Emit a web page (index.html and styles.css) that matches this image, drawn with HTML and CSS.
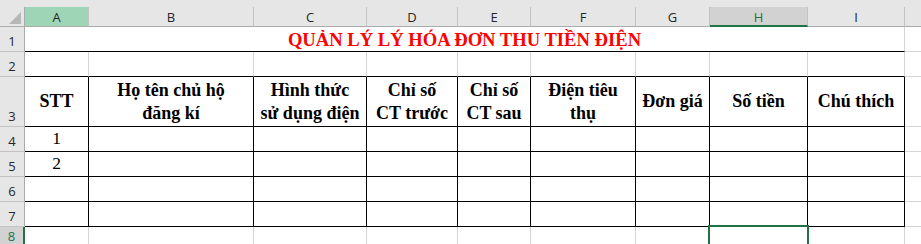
FILE: index.html
```html
<!DOCTYPE html>
<html lang="vi">
<head>
<meta charset="utf-8">
<title>Quản lý hóa đơn thu tiền điện</title>
<link rel="stylesheet" href="styles.css">
</head>
<body>
<div class="sheet">
  <div class="strip"></div>

  <div class="corner"><svg class="tri" width="12" height="12" viewBox="0 0 12 12"><polygon points="12,0 12,12 0,12" fill="#b7b7b7"/></svg></div>
  <div class="colh colh-a">A</div>
  <div class="colh">B</div>
  <div class="colh">C</div>
  <div class="colh">D</div>
  <div class="colh">E</div>
  <div class="colh">F</div>
  <div class="colh">G</div>
  <div class="colh colh-sel">H</div>
  <div class="colh">I</div>
  <div class="colh colh-end"></div>

  <div class="rowh">1</div>
  <div class="cell title bb">QUẢN LÝ LÝ HÓA ĐƠN THU TIỀN ĐIỆN</div>
  <div class="cell tail"></div>

  <div class="rowh">2</div>
  <div class="cell bb"></div>
  <div class="cell bb"></div>
  <div class="cell bb"></div>
  <div class="cell bb"></div>
  <div class="cell bb"></div>
  <div class="cell bb"></div>
  <div class="cell bb"></div>
  <div class="cell bb"></div>
  <div class="cell bb"></div>
  <div class="cell tail"></div>

  <div class="rowh">3</div>
  <div class="cell box head">STT</div>
  <div class="cell box head">Họ tên chủ hộ<br>đăng kí</div>
  <div class="cell box head">Hình thức<br>sử dụng điện</div>
  <div class="cell box head">Chỉ số<br>CT trước</div>
  <div class="cell box head">Chỉ số<br>CT sau</div>
  <div class="cell box head">Điện tiêu<br>thụ</div>
  <div class="cell box head">Đơn giá</div>
  <div class="cell box head">Số tiền</div>
  <div class="cell box head">Chú thích</div>
  <div class="cell tail"></div>

  <div class="rowh">4</div>
  <div class="cell box num">1</div>
  <div class="cell box"></div>
  <div class="cell box"></div>
  <div class="cell box"></div>
  <div class="cell box"></div>
  <div class="cell box"></div>
  <div class="cell box"></div>
  <div class="cell box"></div>
  <div class="cell box"></div>
  <div class="cell tail"></div>

  <div class="rowh">5</div>
  <div class="cell box num">2</div>
  <div class="cell box"></div>
  <div class="cell box"></div>
  <div class="cell box"></div>
  <div class="cell box"></div>
  <div class="cell box"></div>
  <div class="cell box"></div>
  <div class="cell box"></div>
  <div class="cell box"></div>
  <div class="cell tail"></div>

  <div class="rowh">6</div>
  <div class="cell box"></div>
  <div class="cell box"></div>
  <div class="cell box"></div>
  <div class="cell box"></div>
  <div class="cell box"></div>
  <div class="cell box"></div>
  <div class="cell box"></div>
  <div class="cell box"></div>
  <div class="cell box"></div>
  <div class="cell tail"></div>

  <div class="rowh">7</div>
  <div class="cell box"></div>
  <div class="cell box"></div>
  <div class="cell box"></div>
  <div class="cell box"></div>
  <div class="cell box"></div>
  <div class="cell box"></div>
  <div class="cell box"></div>
  <div class="cell box"></div>
  <div class="cell box"></div>
  <div class="cell tail"></div>

  <div class="rowh rowh-sel">8</div>
  <div class="cell"></div>
  <div class="cell"></div>
  <div class="cell"></div>
  <div class="cell"></div>
  <div class="cell"></div>
  <div class="cell"></div>
  <div class="cell"></div>
  <div class="cell active"></div>
  <div class="cell"></div>
  <div class="cell tail"></div>
</div>
</body>
</html>
```

FILE: styles.css
```css
html, body {
  margin: 0;
  padding: 0;
  background: #ffffff;
  overflow: hidden;
}

.sheet {
  display: grid;
  grid-template-columns: 25px 64px 165px 113px 91px 73px 105px 74px 98px 97px 1fr;
  grid-template-rows: 7px 20px 25px 25px 50px 25px 25px 25px 25px 1fr;
  width: 921px;
  height: 244px;
  overflow: hidden;
}

.strip {
  grid-column: 1 / -1;
  background: #e6e6e6;
}

.corner {
  background: #e6e6e6;
  border-right: 1px solid #ababab;
  border-bottom: 1px solid #ababab;
  display: flex;
  justify-content: flex-end;
  align-items: flex-end;
  padding: 0 3px 2px 0;
}

.tri {
  display: block;
}

.colh {
  background: #e6e6e6;
  border-right: 1px solid #c3c3c3;
  border-bottom: 1px solid #ababab;
  display: flex;
  justify-content: center;
  align-items: center;
  font-family: "Open Sans", "Noto Sans", sans-serif;
  font-size: 13px;
  color: #262626;
  padding-top: 1px;
}

.colh-a {
  background: #9fd5b7;
}

.colh-sel {
  background: #d2d2d2;
  border-bottom: 2px solid #217346;
  color: #217346;
  padding-top: 2px;
}

.colh-end {
  border-right: none;
}

.rowh {
  background: #e6e6e6;
  border-right: 1px solid #ababab;
  border-bottom: 1px solid #c3c3c3;
  display: flex;
  justify-content: center;
  align-items: flex-end;
  font-family: "Open Sans", "Noto Sans", sans-serif;
  font-size: 13px;
  line-height: 18px;
  color: #262626;
  padding-bottom: 1px;
}

.rowh-sel {
  background: #d2d2d2;
  border-right: 2px solid #217346;
  color: #217346;
}

.cell {
  border-right: 1px solid #d4d4d4;
  border-bottom: 1px solid #d4d4d4;
  font-family: "Liberation Serif", "Times New Roman", serif;
  color: #000000;
  position: relative;
}

.tail {
  border-right: none;
}

.bb {
  border-bottom-color: #000000;
}

.box {
  border-right-color: #000000;
  border-bottom-color: #000000;
}

.title {
  grid-column: 2 / 11;
  display: flex;
  justify-content: center;
  align-items: flex-end;
  padding-bottom: 1px;
  font-size: 18.6px;
  line-height: 21px;
  font-weight: bold;
  color: #ff0000;
}

.head {
  display: flex;
  align-items: center;
  justify-content: center;
  text-align: center;
  font-size: 18px;
  line-height: 23px;
  font-weight: bold;
  white-space: nowrap;
}

.num {
  display: flex;
  align-items: flex-end;
  justify-content: center;
  font-size: 17.5px;
  line-height: 20px;
  padding-bottom: 3px;
}

.active::after {
  content: "";
  position: absolute;
  top: -2px;
  left: -2px;
  right: -2px;
  bottom: -2px;
  border: 2px solid #217346;
}
```
